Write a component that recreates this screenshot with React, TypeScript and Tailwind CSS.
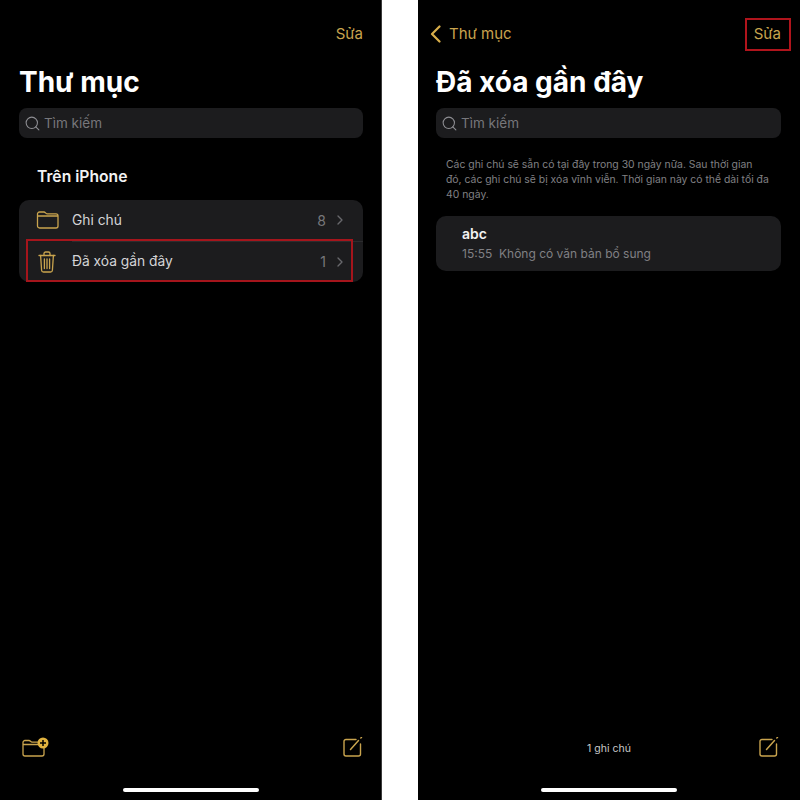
import { ChevronRight, Search } from "lucide-react";

const font = { fontFamily: "Inter, 'Noto Sans', sans-serif" };

function FolderIcon() {
	return (
		<svg width="23" height="18" viewBox="0 0 23 18" fill="none" stroke="#c9a44e" strokeWidth="1.3">
			<path d="M1.5 5V3a2 2 0 0 1 2-2h4.5c1.4 0 1.6 1.8 3 1.8h9a2 2 0 0 1 2 2V15a2 2 0 0 1-2 2H3.5a2 2 0 0 1-2-2V5h20.5" />
		</svg>
	);
}

function TrashIcon() {
	return (
		<svg width="18" height="22" viewBox="0 0 18 22" fill="none" stroke="#c9a44e" strokeWidth="1.3" strokeLinecap="round">
			<path d="M1 4.5h16" />
			<path d="M6 4.5V2.6A1.6 1.6 0 0 1 7.6 1h2.8A1.6 1.6 0 0 1 12 2.6v1.9" />
			<path d="M2.6 4.5l1 14.7A1.9 1.9 0 0 0 5.5 21h7a1.9 1.9 0 0 0 1.9-1.8l1-14.7" />
			<path d="M6.4 8v9.5M9 8v9.5M11.6 8v9.5" />
		</svg>
	);
}

function NewFolderIcon() {
	return (
		<svg width="27" height="20" viewBox="0 0 27 20" fill="none">
			<path
				d="M1 7V5.5a2 2 0 0 1 2-2h4c1.4 0 1.6 1.6 3 1.6h8M1 7v10a2 2 0 0 0 2 2h17a2 2 0 0 0 2-2V10M1 7.5h16"
				stroke="#c9a44e"
				strokeWidth="1.3"
			/>
			<circle cx="21" cy="6" r="5.5" fill="#e0b23f" />
			<path d="M21 3v6M18 6h6" stroke="#000" strokeWidth="1.5" />
		</svg>
	);
}

function ComposeIcon() {
	return (
		<svg width="20" height="20" viewBox="0 0 20 20" fill="none" stroke="#c9a44e" strokeWidth="1.4" strokeLinecap="round">
			<path d="M13 2.5H3a2 2 0 0 0-2 2V17a2 2 0 0 0 2 2h12.5a2 2 0 0 0 2-2V7" />
			<path d="M7.5 12.5L15.5 3.5" strokeWidth="1.5" />
			<path d="M17.8 1l.7-.6" />
		</svg>
	);
}

function BackChevron() {
	return (
		<svg width="11" height="18" viewBox="0 0 11 18" fill="none" stroke="#d8ae4a" strokeWidth="2.2" strokeLinecap="round" strokeLinejoin="round">
			<path d="M9.5 1.5L2 9l7.5 7.5" />
		</svg>
	);
}

function SearchBar() {
	return (
		<div className="flex h-[30px] items-center gap-[3px] rounded-lg bg-[#1c1c1e] pl-[5px]">
			<Search size={17} strokeWidth={1.5} className="text-[#8e8e93]" />
			<span className="text-[13.5px] text-[#77777b]">Tìm kiếm</span>
		</div>
	);
}

function FolderRow({ icon, name, count }: { icon: React.ReactNode; name: string; count: number }) {
	return (
		<div className="flex h-[40.5px] items-center">
			<div className="flex w-[53px] justify-center pl-[3px]">{icon}</div>
			<span className="flex-1 text-[13.8px] text-[#d4d4d6]">{name}</span>
			<span className="text-[14px] text-[#77777b]">{count}</span>
			<ChevronRight size={16} strokeWidth={2} className="mr-[15px] ml-[6px] text-[#68686c]" />
		</div>
	);
}

function HomeBar() {
	return (
		<div className="flex justify-center pb-[8px] pt-[31px]">
			<div className="h-[4px] w-[136px] rounded-full bg-white" />
		</div>
	);
}

export default function App() {
	return (
		<div className="flex h-[800px] w-[800px] overflow-hidden bg-white" style={font}>
			<div className="flex w-[382px] flex-col border-r border-[#3a3a3a] bg-black pl-[19px] pr-[18px]">
				<div className="flex h-[68px] justify-end pt-[23px]">
					<span className="text-[15px] leading-[22px] text-[#c9a44e]">Sửa</span>
				</div>
				<h1 className="text-[28px] font-bold leading-[29px] text-white">Thư mục</h1>
				<div className="mt-[11px]">
					<SearchBar />
				</div>
				<h2 className="mt-[28px] pl-[18px] text-[15.7px] font-semibold leading-[22px] text-[#f2f2f2]">Trên iPhone</h2>
				<div className="relative mt-[12px] rounded-[10px] bg-[#1c1c1e]">
					<FolderRow icon={<FolderIcon />} name="Ghi chú" count={8} />
					<div className="ml-[53px] h-px bg-[#2c2c2e]" />
					<FolderRow icon={<TrashIcon />} name="Đã xóa gần đây" count={1} />
					<div className="absolute left-[7px] top-[39px] h-[43px] w-[327px] border-2 border-[#a5151c]" />
				</div>
				<div className="mt-auto flex items-end justify-between pl-[3px]">
					<NewFolderIcon />
					<ComposeIcon />
				</div>
				<HomeBar />
			</div>

			<div className="ml-[36px] flex w-[382px] flex-col bg-black pl-[18px] pr-[19px]">
				<div className="relative flex h-[68px] items-start justify-between pt-[23px]">
					<div className="-ml-[6px] flex items-center gap-[8px] text-[#c9a44e]">
						<BackChevron />
						<span className="text-[15px] leading-[22px]">Thư mục</span>
					</div>
					<span className="text-[15px] leading-[22px] text-[#c9a44e]">Sửa</span>
					<div className="absolute right-[-10px] top-[18px] h-[33px] w-[46px] border-2 border-[#b0141c]" />
				</div>
				<h1 className="text-[28px] font-bold leading-[29px] text-white">Đã xóa gần đây</h1>
				<div className="mt-[11px]">
					<SearchBar />
				</div>
				<p className="mt-[19px] px-[10px] text-[10.4px] leading-[15px] text-[#808084]">
					Các ghi chú sẽ sẵn có tại đây trong 30 ngày nữa. Sau thời gian
					<br />
					đó, các ghi chú sẽ bị xóa vĩnh viễn. Thời gian này có thể dài tối đa
					<br />
					40 ngày.
				</p>
				<div className="mt-[14px] flex h-[55px] flex-col justify-center rounded-[10px] bg-[#1c1c1e] pl-[26px]">
					<span className="text-[14px] font-semibold leading-[20px] text-[#f2f2f2]">abc</span>
					<span className="text-[12px] leading-[20px] text-[#808084]">15:55&nbsp;&nbsp;Không có văn bản bổ sung</span>
				</div>
				<div className="mt-auto flex items-end justify-between">
					<div className="w-[23px]" />
					<span className="text-[10.5px] leading-[16px] text-[#c8c8c8]">1 ghi chú</span>
					<div className="mr-[2px]">
						<ComposeIcon />
					</div>
				</div>
				<HomeBar />
			</div>
		</div>
	);
}
